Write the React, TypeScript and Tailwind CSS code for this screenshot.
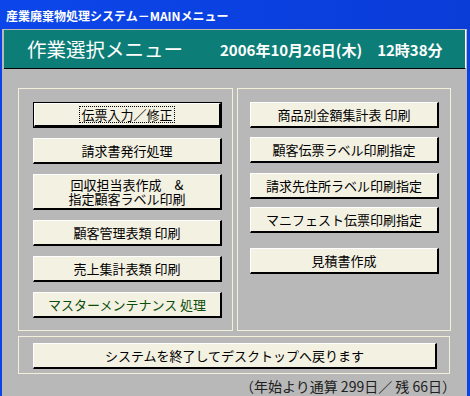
import React from "react";

const jp = { fontFamily: '"Noto Sans CJK JP", "Noto Sans", sans-serif' };

type Btn = { label: React.ReactNode; h?: string; mt: string; green?: boolean; focus?: boolean };

const left: Btn[] = [
  { label: "伝票入力／修正", mt: "mt-[13px]", focus: true },
  { label: "請求書発行処理", mt: "mt-[10px]" },
  { label: "回収担当表作成　&\n指定顧客ラベル印刷", mt: "mt-[10px]", h: "h-[36px]" },
  { label: "顧客管理表類 印刷", mt: "mt-[10px]" },
  { label: "売上集計表類 印刷", mt: "mt-[10px]" },
  { label: "マスターメンテナンス 処理", mt: "mt-[10px]", green: true },
];

const right: Btn[] = [
  { label: "商品別金額集計表 印刷", mt: "mt-[13px]" },
  { label: "顧客伝票ラベル印刷指定", mt: "mt-[9px]" },
  { label: "請求先住所ラベル印刷指定", mt: "mt-[10px]" },
  { label: "マニフェスト伝票印刷指定", mt: "mt-[8px]" },
  { label: "見積書作成", mt: "mt-[15px]" },
];

const Button = ({ b, w = "w-[189px]" }: { b: Btn; w?: string }) => (
  <div
    className={`${b.mt} ${w} ${b.h ?? "h-[26px]"} ${
      b.focus ? "border border-black" : ""
    } shrink-0`}
  >
    <div
      className={`w-full h-full bg-[#f3f1e2] border-t border-l border-t-white border-l-white border-b-2 border-r-2 border-b-black border-r-black flex items-center justify-center text-center whitespace-pre leading-[14px] text-[13px] ${
        b.green ? "text-[#0b4d0b]" : "text-black"
      }`}
    >
      {b.focus ? (
        <span className="border border-dotted border-black px-[1px] leading-[13px] py-[1px]">{b.label}</span>
      ) : (
        b.label
      )}
    </div>
  </div>
);

export default function App() {
  return (
    <div className="w-[470px] h-[396px] overflow-hidden flex flex-col bg-[#0b43e6]" style={jp}>
      <div className="h-[29px] shrink-0 pl-[6px] pt-[2px] flex items-center text-white font-bold text-[12px] bg-gradient-to-r from-[#0c46ea] to-[#0a3cd8]">
        産業廃棄物処理システム－MAINメニュー
      </div>
      <div className="flex-1 ml-[2px] mr-[3px] bg-[#b8b8b8] pl-[2px] pr-[1px] pt-[1px] flex flex-col">
        <div className="h-[39px] shrink-0 bg-[#0c7e77] border-r border-r-white border-b border-b-black flex items-center text-white">
          <span className="ml-[23px] text-[19.5px] leading-none">作業選択メニュー</span>
          <span className="ml-[37px] text-[15px] font-bold leading-none">2006年10月26日(木)　12時38分</span>
        </div>
        <div className="mt-[19px] ml-[14px] flex gap-[4px]">
          <div className="w-[215px] h-[243px] border border-[#f2f0da] flex flex-col pl-[14px]">
            {left.map((b, i) => (
              <Button key={i} b={b} />
            ))}
          </div>
          <div className="w-[214px] h-[243px] border border-[#f2f0da] flex flex-col pl-[12px]">
            {right.map((b, i) => (
              <Button key={i} b={b} />
            ))}
          </div>
        </div>
        <div className="mt-[5px] ml-[14px] w-[432px] h-[38px] border border-[#f2f0da] pl-[14px] flex flex-col">
          <Button b={{ label: "システムを終了してデスクトップへ戻ります", mt: "mt-[6px]" }} w="w-[404px]" />
        </div>
        <div className="mt-[3px] w-[452px] text-right text-[14px] leading-[18px] text-[#202020]">
          （年始より通算 299日／ 残 66日）
        </div>
      </div>
    </div>
  );
}
